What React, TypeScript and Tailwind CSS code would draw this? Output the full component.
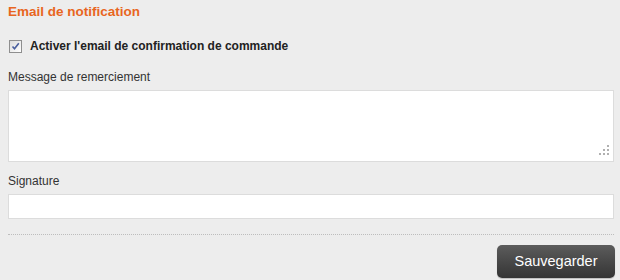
import React from 'react'

const font = { fontFamily: '"Liberation Sans", Arial, sans-serif' }

function Checkbox() {
  return (
    <span className="relative inline-block h-[13px] w-[13px] border border-[#8f8f8f] bg-gradient-to-br from-[#dcdcdc] to-[#ffffff]">
      <svg viewBox="0 0 11 11" className="absolute left-0 top-0 h-[11px] w-[11px]">
        <path d="M2.5 5.5 L4.5 7.8 L8.8 2.2" fill="none" stroke="#4a5f9e" strokeWidth="1.6" />
      </svg>
    </span>
  )
}

function Grip() {
  const dots = [
    [8, 0],
    [4, 4],
    [8, 4],
    [0, 8],
    [4, 8],
    [8, 8],
  ]
  return (
    <div className="pointer-events-none absolute bottom-[7px] right-[5px] h-[10px] w-[10px]">
      {dots.map(([x, y], i) => (
        <span key={i} className="absolute h-[2px] w-[2px] bg-[#b0b0b0]" style={{ left: x, top: y }} />
      ))}
    </div>
  )
}

export default function App() {
  return (
    <div className="h-[280px] w-[620px] overflow-hidden bg-[#ededed] px-2 text-[#333]" style={font}>
      <h2 className="pt-[3px] text-[13.5px] font-bold leading-[17px] text-[#e8661f]">Email de notification</h2>

      <label className="mt-[18px] flex items-center gap-2 pl-[1px] text-[12px] font-bold leading-[15px] text-[#222]">
        <Checkbox />
        <span className="pt-[1px]">Activer l'email de confirmation de commande</span>
      </label>

      <div className="mt-[16px] text-[12px] leading-[14px] text-[#333]">Message de remerciement</div>
      <div className="relative mt-[6px] w-[606px]">
        <textarea className="block h-[72px] w-full resize-none border border-[#dcdcdc] bg-white outline-none" />
        <Grip />
      </div>

      <div className="mt-[12px] text-[12px] leading-[14px] text-[#333]">Signature</div>
      <input className="mt-[6px] block h-[25px] w-[606px] border border-[#dcdcdc] bg-white outline-none" />

      <div className="mt-[15px] w-[606px] border-t border-dotted border-[#bdbdbd]" />

      <div className="mt-[10px] flex w-[607px] justify-end">
        <button className="h-[33px] w-[118px] rounded-[5px] bg-gradient-to-b from-[#5c5c5c] to-[#353535] text-[14.5px] text-white shadow-[0_1px_1px_rgba(0,0,0,0.2)]">
          Sauvegarder
        </button>
      </div>
    </div>
  )
}
